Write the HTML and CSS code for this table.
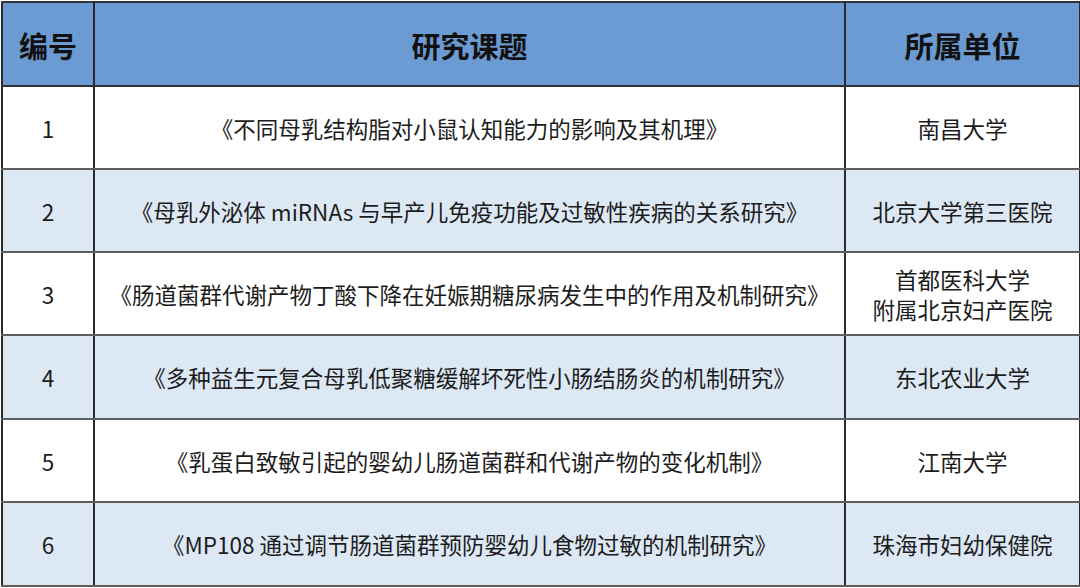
FILE: index.html
```html
<!DOCTYPE html>
<html lang="zh">
<head>
<meta charset="utf-8">
<link rel="stylesheet" href="styles.css">
</head>
<body>
<table class="grid">
  <colgroup>
    <col class="c-no">
    <col class="c-topic">
    <col class="c-unit">
  </colgroup>
  <thead>
    <tr class="head">
      <th>编号</th>
      <th>研究课题</th>
      <th>所属单位</th>
    </tr>
  </thead>
  <tbody>
    <tr class="odd">
      <td>1</td>
      <td>《不同母乳结构脂对小鼠认知能力的影响及其机理》</td>
      <td>南昌大学</td>
    </tr>
    <tr class="even">
      <td>2</td>
      <td>《母乳外泌体 miRNAs 与早产儿免疫功能及过敏性疾病的关系研究》</td>
      <td>北京大学第三医院</td>
    </tr>
    <tr class="odd">
      <td>3</td>
      <td>《肠道菌群代谢产物丁酸下降在妊娠期糖尿病发生中的作用及机制研究》</td>
      <td>首都医科大学<br>附属北京妇产医院</td>
    </tr>
    <tr class="even">
      <td>4</td>
      <td>《多种益生元复合母乳低聚糖缓解坏死性小肠结肠炎的机制研究》</td>
      <td>东北农业大学</td>
    </tr>
    <tr class="odd">
      <td>5</td>
      <td>《乳蛋白致敏引起的婴幼儿肠道菌群和代谢产物的变化机制》</td>
      <td>江南大学</td>
    </tr>
    <tr class="even">
      <td>6</td>
      <td>《MP108 通过调节肠道菌群预防婴幼儿食物过敏的机制研究》</td>
      <td>珠海市妇幼保健院</td>
    </tr>
  </tbody>
</table>
</body>
</html>
```

FILE: styles.css
```css
html, body {
  margin: 0;
  padding: 0;
  background: #ffffff;
}
body {
  font-family: "Noto Sans CJK SC", "Noto Sans", sans-serif;
  color: #1c1c1c;
}
.grid {
  margin: 1px 0 0 1px;
  width: 1078px;
  border-collapse: collapse;
  table-layout: fixed;
}
.c-no { width: 92px; }
.c-topic { width: 751px; }
.c-unit { width: 235px; }
.grid th, .grid td {
  text-align: center;
  vertical-align: middle;
  padding: 0;
  border-left: 2px solid #2a2a2a;
  border-right: 2px solid #2a2a2a;
  border-top: 2px solid #5e5e5e;
  border-bottom: 2px solid #5e5e5e;
}
.head {
  height: 84px;
  background: #6b9bd2;
}
.head th {
  font-size: 29px;
  line-height: 40px;
  font-weight: 700;
  color: #111111;
  border-top-color: #333333;
  border-bottom-color: #333333;
  padding-top: 1px;
}
tbody tr {
  height: 83px;
}
tbody td {
  font-size: 22.5px;
  line-height: 30px;
  font-weight: 400;
  color: #1c1c1c;
}
tbody tr:nth-child(4), tbody tr:nth-child(6) {
  height: 84px;
}
.odd { background: #ffffff; }
.even { background: #dde8f5; }
```
